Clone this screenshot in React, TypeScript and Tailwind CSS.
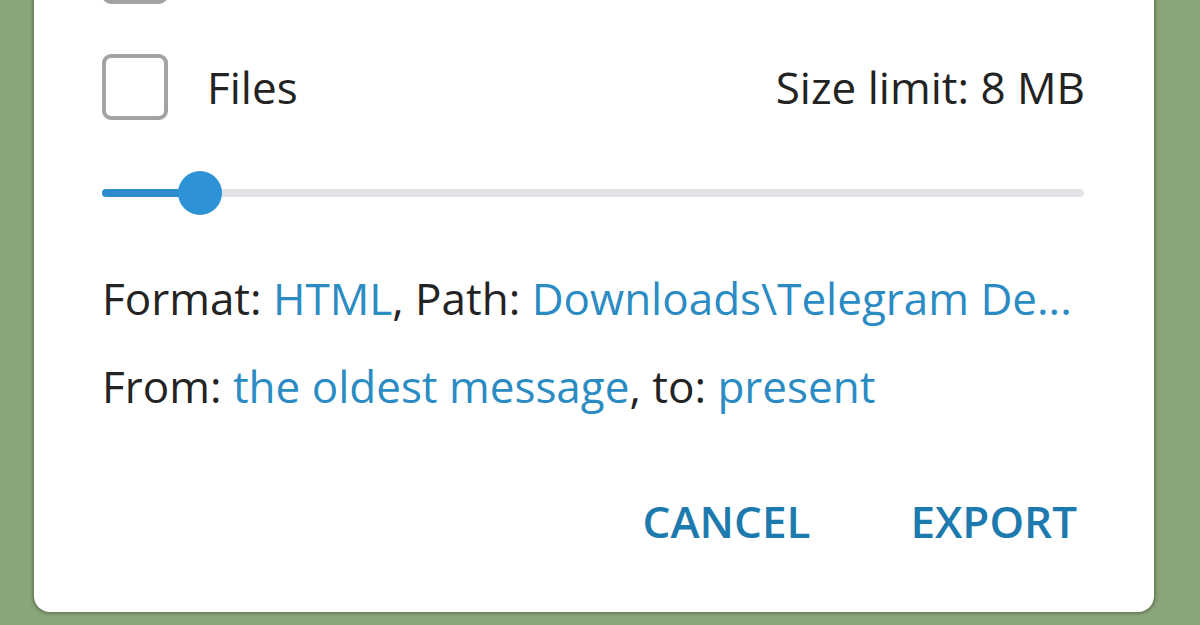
import { useState } from "react";

function Checkbox({ className = "" }: { className?: string }) {
  return (
    <span
      className={`block w-[66px] h-[66px] shrink-0 rounded-[9px] border-[4px] border-[#a3a3a3] bg-white ${className}`}
    />
  );
}

export default function App() {
  const [value] = useState(10);

  return (
    <div className="h-[625px] w-[1200px] overflow-hidden bg-[#8ba57a] pl-[34px] font-['Open_Sans',sans-serif]">
      <div className="w-[1120px] rounded-b-[16px] bg-white px-[68px] pb-[65px] text-[44px] text-[#232323] shadow-[0_0_3px_2px_rgba(60,80,50,0.45)]">
        <Checkbox className="-mt-[62px]" />

        <div className="mt-[50px] flex h-[66px] items-center">
          <Checkbox />
          <span className="ml-[39px] leading-[52px]">Files</span>
          <span className="ml-auto mr-[1px] leading-[52px]">Size limit: 8 MB</span>
        </div>

        <div className="relative mt-[51px] mr-[2px] h-[44px]">
          <div className="absolute left-0 right-0 top-[18px] h-[8px] rounded-full bg-[#e3e4e7]" />
          <div
            className="absolute left-0 top-[18px] h-[8px] rounded-full bg-[#2e8ccb]"
            style={{ width: `${value}%` }}
          />
          <div
            className="absolute top-0 h-[44px] w-[44px] -translate-x-1/2 rounded-full bg-[#2e93d6]"
            style={{ left: `${value}%` }}
          />
        </div>

        <p className="mt-[57px] leading-[52px] whitespace-nowrap">
          Format: <span className="text-[#2b8bc3]">HTML</span>, Path:{" "}
          <span className="text-[#2b8bc3]">Downloads\Telegram De...</span>
        </p>
        <p className="mt-[36px] leading-[52px] whitespace-nowrap">
          From: <span className="text-[#2b8bc3]">the oldest message</span>, to:{" "}
          <span className="text-[#2b8bc3]">present</span>
        </p>

        <div className="mt-[83px] flex justify-end gap-[100px] pr-[9px]">
          <button className="font-semibold uppercase leading-[52px] text-[#1d7aae]">
            Cancel
          </button>
          <button className="font-semibold uppercase leading-[52px] text-[#1d7aae]">
            Export
          </button>
        </div>
      </div>
    </div>
  );
}
